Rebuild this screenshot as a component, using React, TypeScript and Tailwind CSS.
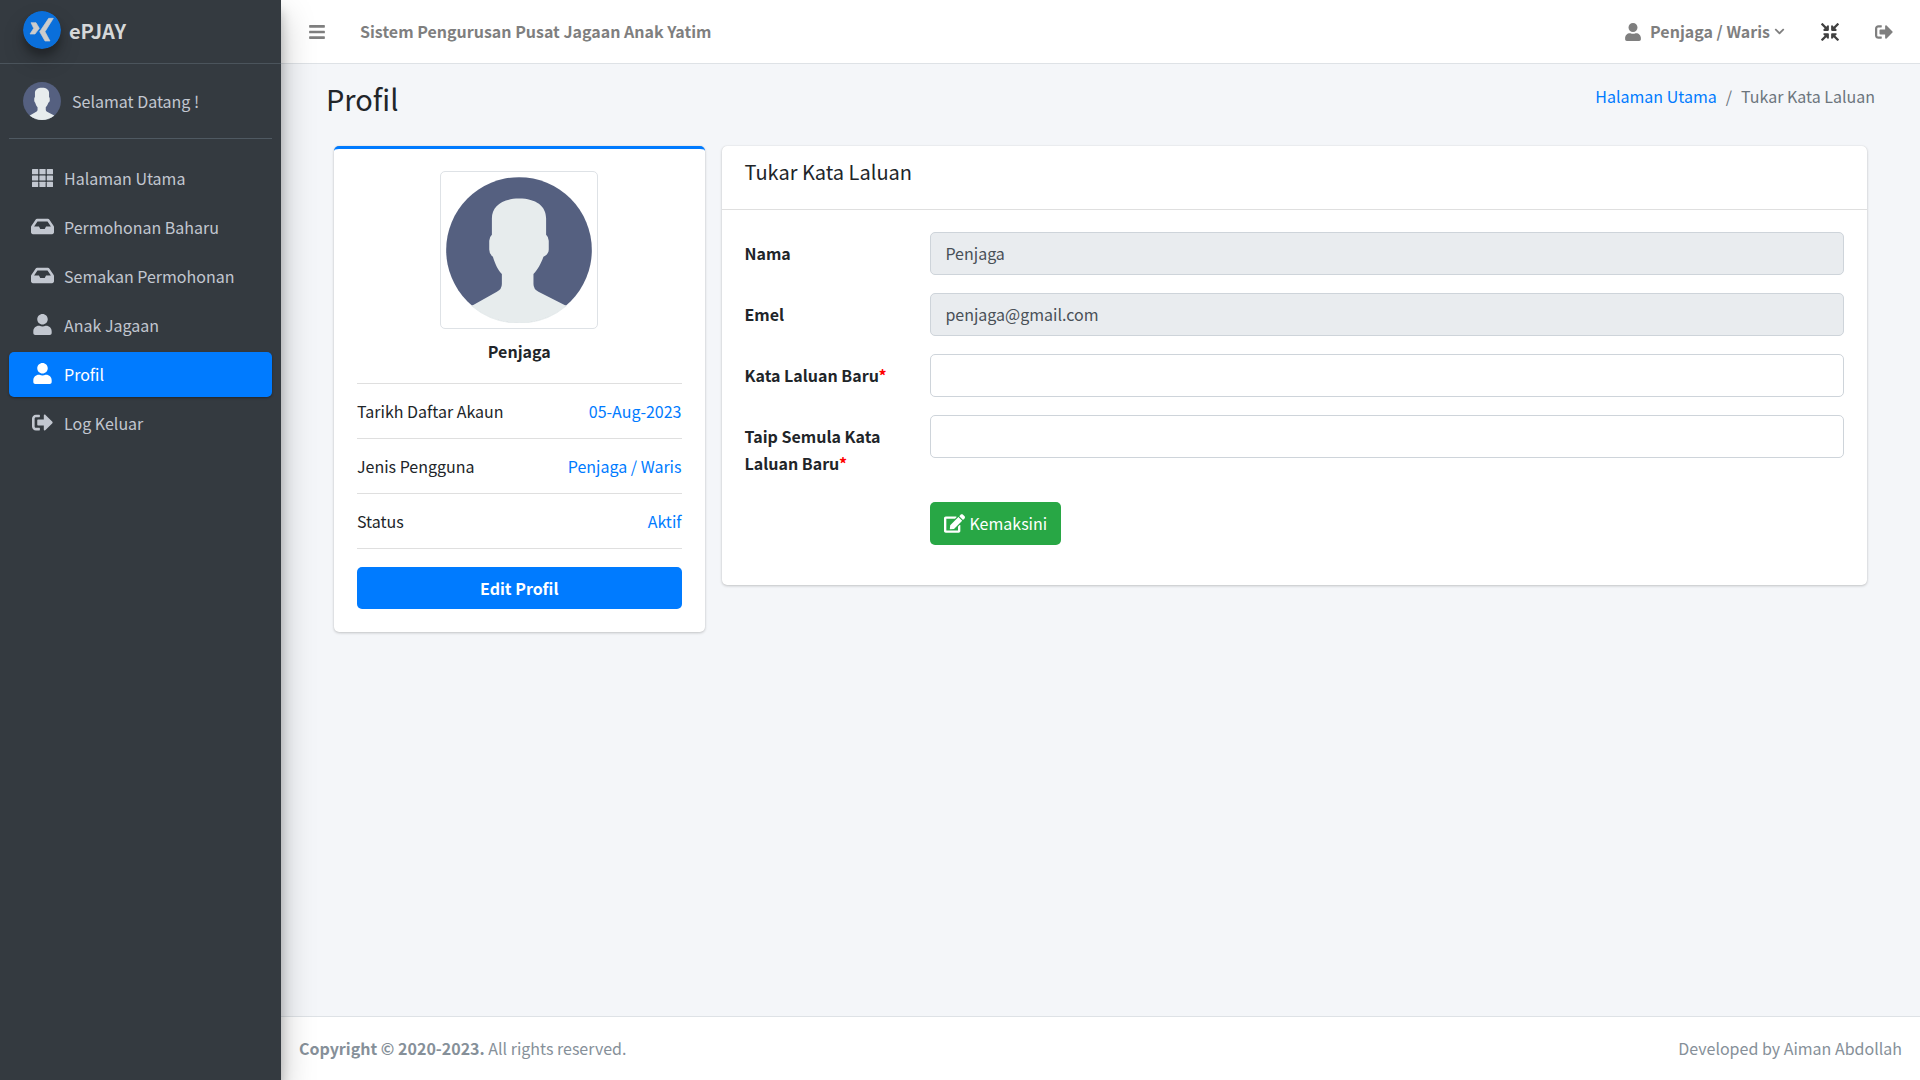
import type { ReactNode } from "react";
import {
  FaBars,
  FaChevronDown,
  FaCompressArrowsAlt,
  FaEdit,
  FaInbox,
  FaSignOutAlt,
  FaUser,
} from "react-icons/fa";

function Logo({ className }: { className?: string }) {
  return (
    <svg viewBox="0 0 114 114" className={className} aria-hidden="true">
      <circle cx="57" cy="57" r="57" fill="#0a6fdb" />
      <g fill="#cccccc" stroke="#cccccc" strokeWidth="2" strokeLinejoin="round">
        <path d="M77 22H91L66 62L81 90H66L50 62Z" />
        <path d="M24 35H39L49 52L36 69H21L32 52Z" />
      </g>
    </svg>
  );
}

function GridIcon({ className }: { className?: string }) {
  return (
    <svg viewBox="0 0 21 18" className={className} fill="currentColor" aria-hidden="true">
      {[0, 6.4, 12.8].map((y) =>
        [0, 7.4, 14.8].map((x) => (
          <rect key={`${x}-${y}`} x={x} y={y} width="6.2" height="5.2" rx="0.5" />
        )),
      )}
    </svg>
  );
}

function Avatar({ className }: { className?: string }) {
  return (
    <svg viewBox="0 0 439 439" className={className} role="img" aria-label="Penjaga">
      <circle cx="219.5" cy="219.5" r="219" fill="#556080" />
      <path
        fill="#e7eced"
        d="M138 125C138 88 168 65 219.500 65S301 88 301 125V174Q309 181 309 192V218Q309 232 293 240C285 262 277 277 263 292V322Q263 338 278 345L361 387A219.500 219.500 0 0 1 78 387L153 345Q168 338 168 322V292C154 277 148 262 141 240Q130 232 130 218V192Q130 181 138 174Z"
      />
      <path d="M361 387A219.500 219.500 0 0 1 78 387" fill="none" stroke="#e7eced" strokeWidth="4" />
    </svg>
  );
}

const navItems: { label: string; icon: ReactNode; active?: boolean }[] = [
  { label: "Halaman Utama", icon: <GridIcon className="h-[18px] w-[21px]" /> },
  { label: "Permohonan Baharu", icon: <FaInbox className="size-[23px]" /> },
  { label: "Semakan Permohonan", icon: <FaInbox className="size-[23px]" /> },
  { label: "Anak Jagaan", icon: <FaUser className="size-[21px]" /> },
  { label: "Profil", icon: <FaUser className="size-[21px]" />, active: true },
  { label: "Log Keluar", icon: <FaSignOutAlt className="size-[21px]" /> },
];

function Sidebar() {
  return (
    <aside className="relative z-10 w-[281px] shrink-0 bg-[#343a40] text-[#c2c7d0] shadow-[0_16px_32px_rgba(0,0,0,0.25),0_11px_11px_rgba(0,0,0,0.22)]">
      <a href="#" className="flex h-16 items-center gap-2 border-b border-[#4b545c] pb-1 pl-[23px]">
        <Logo className="size-[38px] rounded-full shadow-[0_11px_22px_rgba(0,0,0,0.19),0_7px_7px_rgba(0,0,0,0.23)]" />
        <span className="pt-0.5 text-xl font-bold text-[#d6d8d9]">ePJAY</span>
      </a>
      <div className="mx-[9px] flex h-[75px] items-center gap-[11px] border-b border-[#4f5962] pl-[14px]">
        <Avatar className="size-[38px]" />
        <a href="#">Selamat Datang !</a>
      </div>
      <nav className="mx-[9px] mt-[17px] flex flex-col gap-1">
        {navItems.map((item) => (
          <a
            key={item.label}
            href="#"
            className={
              item.active
                ? "flex h-[45px] items-center gap-[9px] rounded-[5px] bg-[#007bff] pl-[21px] text-white shadow-[0_1px_3px_rgba(0,0,0,0.12),0_1px_2px_rgba(0,0,0,0.24)]"
                : "flex h-[45px] items-center gap-[9px] rounded-[5px] pl-[21px]"
            }
          >
            <span className="flex w-[25px] justify-center pb-0.5">{item.icon}</span>
            {item.label}
          </a>
        ))}
      </nav>
    </aside>
  );
}

function Header() {
  return (
    <header className="flex h-16 shrink-0 items-center border-b border-[#dee2e6] bg-white px-[27px] font-bold text-[#7f7f7f]">
      <button type="button" aria-label="Menu">
        <FaBars className="size-[18px]" />
      </button>
      <a href="#" className="ml-[34px]">
        Sistem Pengurusan Pusat Jagaan Anak Yatim
      </a>
      <button type="button" className="ml-auto flex items-center">
        <FaUser className="mr-2 size-[18px]" />
        Penjaga / Waris
        <FaChevronDown className="ml-1 size-[11px]" />
      </button>
      <button type="button" aria-label="Skrin penuh" className="ml-9 text-[#404040]">
        <FaCompressArrowsAlt className="size-[18px]" />
      </button>
      <a href="#" aria-label="Log keluar" className="ml-9">
        <FaSignOutAlt className="size-[18px]" />
      </a>
    </header>
  );
}

const details = [
  { label: "Tarikh Daftar Akaun", value: "05-Aug-2023" },
  { label: "Jenis Pengguna", value: "Penjaga / Waris" },
  { label: "Status", value: "Aktif" },
];

function ProfileCard() {
  return (
    <section className="rounded-[5px] border-t-[3px] border-[#007bff] bg-white px-[23px] pt-[22px] pb-[23px] shadow-[0_0_1px_rgba(0,0,0,0.13),0_1px_3px_rgba(0,0,0,0.2)]">
      <div className="mx-auto w-[158px] rounded-[5px] border border-[#dee2e6] bg-white p-[5px]">
        <Avatar className="w-full" />
      </div>
      <h2 className="mt-[9px] text-center font-bold">Penjaga</h2>
      <dl className="mt-[18px] border-t border-[#dfdfdf]">
        {details.map((d) => (
          <div key={d.label} className="flex h-[55px] items-center justify-between border-b border-[#dfdfdf]">
            <dt>{d.label}</dt>
            <dd className="text-[#007bff]">{d.value}</dd>
          </div>
        ))}
      </dl>
      <button type="button" className="mt-[18px] h-[42px] w-full rounded-[5px] bg-[#007bff] font-bold text-white">
        Edit Profil
      </button>
    </section>
  );
}

const fields = [
  { id: "nama", label: "Nama", type: "text", value: "Penjaga" },
  { id: "emel", label: "Emel", type: "email", value: "penjaga@gmail.com" },
  { id: "baru", label: "Kata Laluan Baru", type: "password" },
  { id: "ulang", label: "Taip Semula Kata Laluan Baru", type: "password" },
];

function PasswordCard() {
  return (
    <section className="rounded-[5px] bg-white shadow-[0_0_1px_rgba(0,0,0,0.13),0_1px_3px_rgba(0,0,0,0.2)]">
      <h2 className="h-16 border-b border-[#dfdfdf] px-[23px] pt-[11px] text-[20px] leading-[30px]">Tukar Kata Laluan</h2>
      <form className="flex flex-col gap-[18px] px-[23px] pt-[22px] pb-10">
        {fields.map((f) => (
          <div key={f.id} className="grid grid-cols-6 items-start gap-4">
            <label htmlFor={f.id} className="pt-2 font-bold">
              {f.label}
              {f.value === undefined && <span className="text-[#ff0000]">*</span>}
            </label>
            <input
              id={f.id}
              type={f.type}
              defaultValue={f.value}
              disabled={f.value !== undefined}
              className="col-span-5 h-[43px] rounded-[5px] border border-[#ced4da] px-[14px] pb-0.5 text-[#495057] disabled:bg-[#e9ecef]"
            />
          </div>
        ))}
        <div className="mt-[7px] grid grid-cols-6 gap-4">
          <div className="col-span-5 col-start-2">
            <button
              type="submit"
              className="flex h-[43px] items-center gap-1 rounded-[5px] bg-[#28a745] px-[14px] text-white"
            >
              <FaEdit className="size-[21px]" />
              Kemaksini
            </button>
          </div>
        </div>
      </form>
    </section>
  );
}

export default function App() {
  return (
    <div className="flex min-h-screen bg-[#f4f6f9] font-['Noto_Sans_CJK_SC',sans-serif] text-base leading-[27px] text-[#212529]">
      <Sidebar />
      <div className="flex min-w-0 flex-1 flex-col">
        <Header />
        <main className="flex-1">
          <div className="flex items-start justify-between px-[45px] pt-[15px]">
            <h1 className="text-[29px] leading-[38px]">Profil</h1>
            <nav aria-label="Breadcrumb" className="flex gap-[9px] pt-1 text-[#6c757d]">
              <a href="#" className="text-[#007bff]">
                Halaman Utama
              </a>
              <span>/</span>
              <span>Tukar Kata Laluan</span>
            </nav>
          </div>
          <div className="mt-[29px] grid grid-cols-4 items-start gap-[17px] px-[53px]">
            <ProfileCard />
            <div className="col-span-3">
              <PasswordCard />
            </div>
          </div>
        </main>
        <footer className="flex h-16 items-center justify-between border-t border-[#dee2e6] bg-white px-[18px] text-[#869099]">
          <p>
            <strong>Copyright © 2020-2023.</strong> All rights reserved.
          </p>
          <p>Developed by Aiman Abdollah</p>
        </footer>
      </div>
    </div>
  );
}
